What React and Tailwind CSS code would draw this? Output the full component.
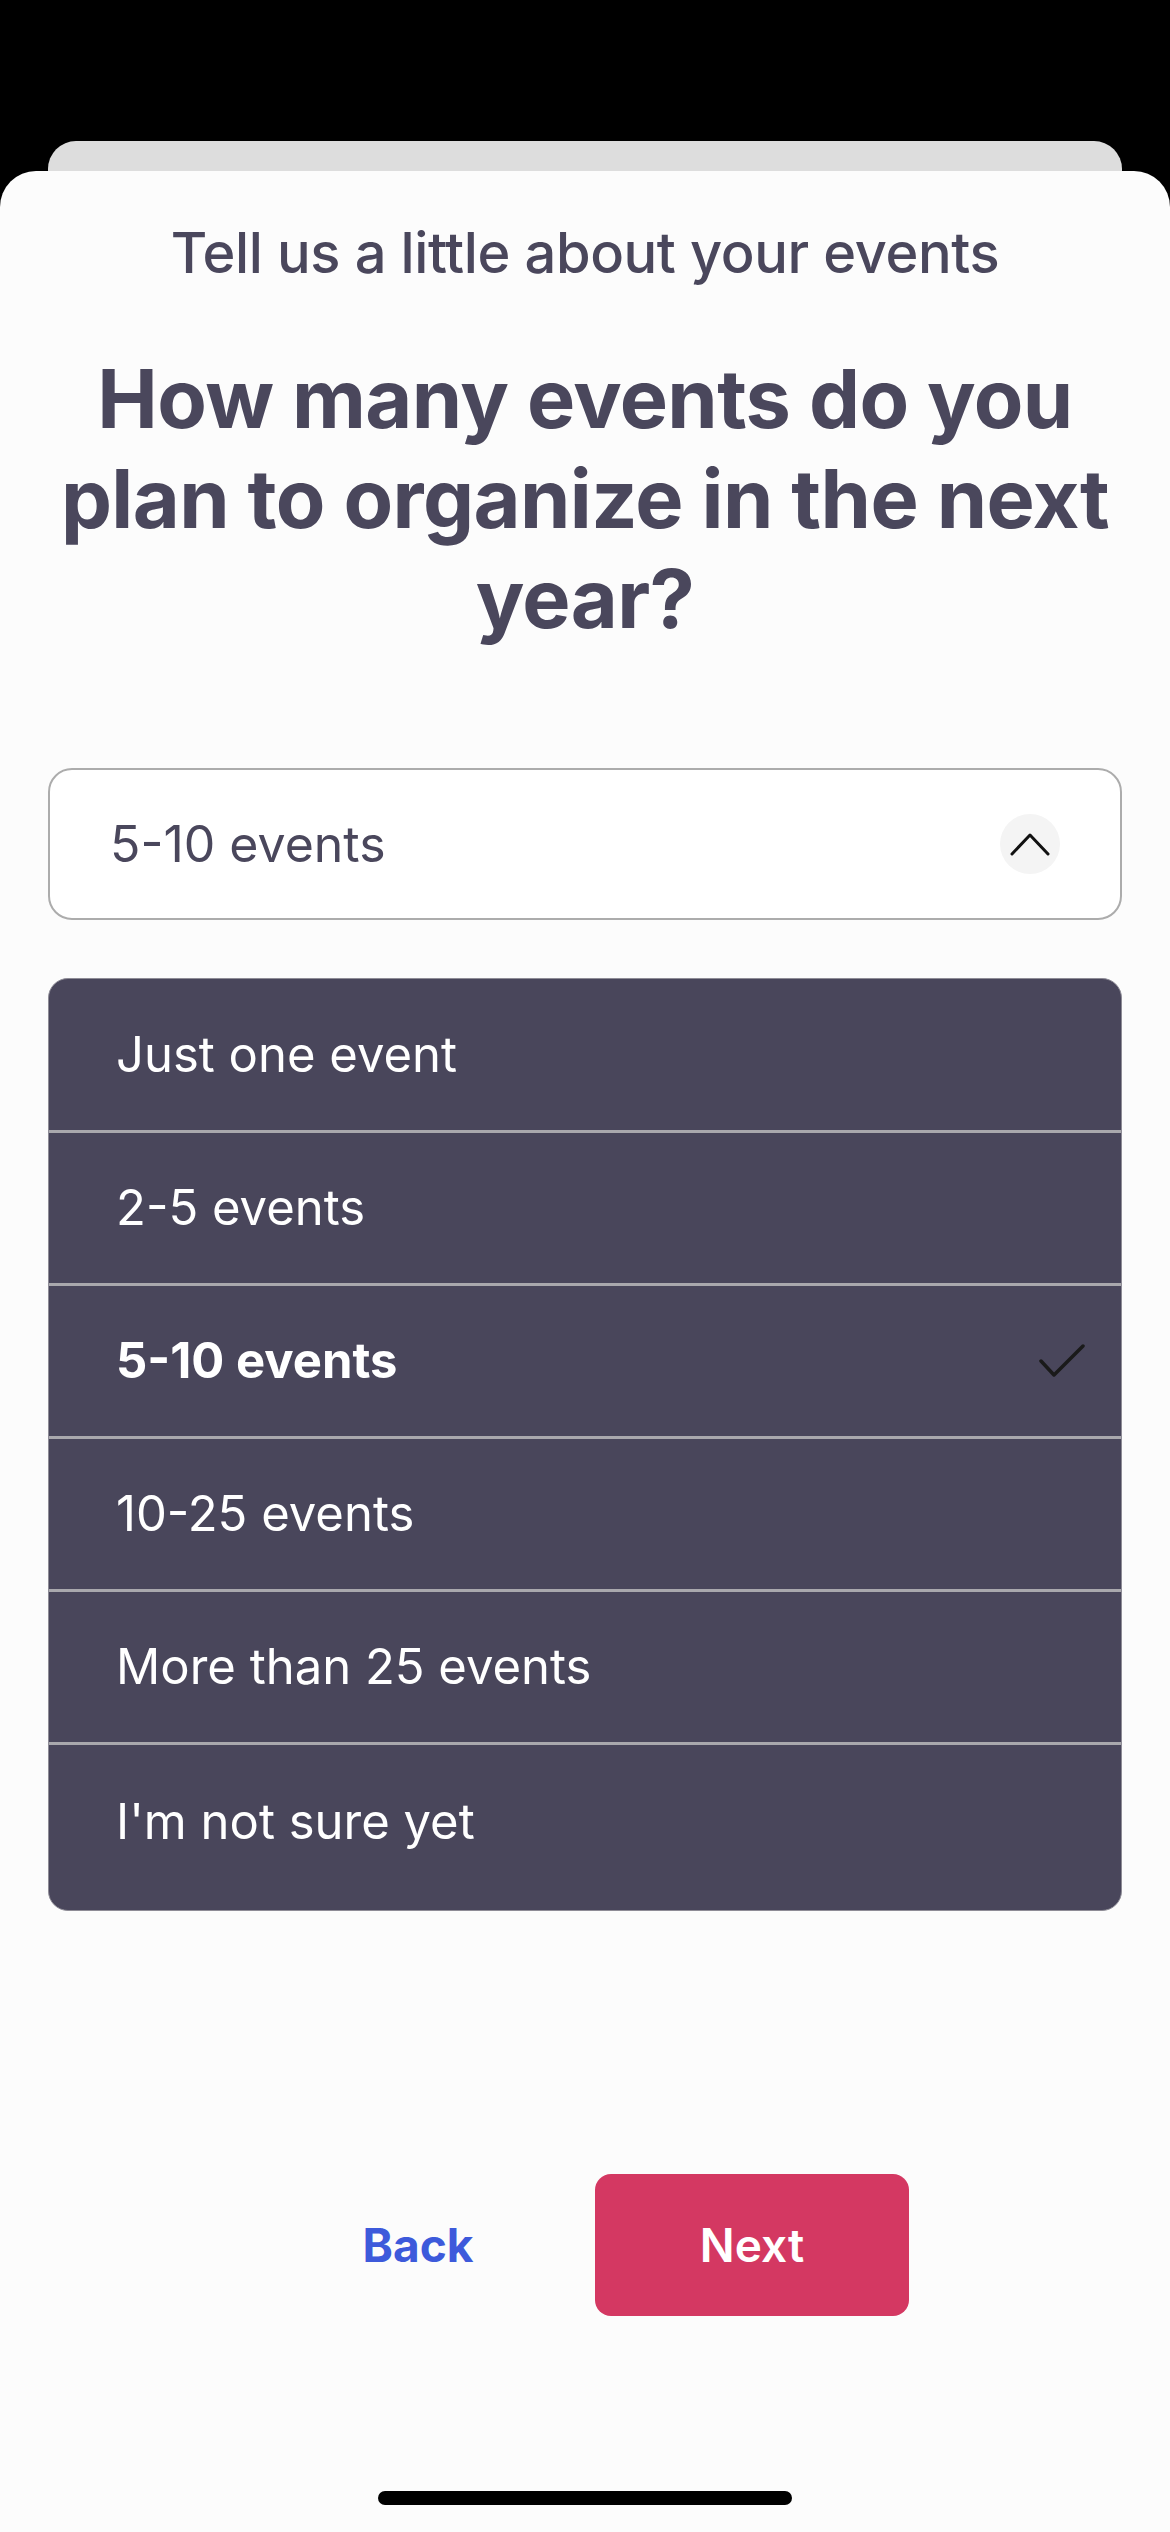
import React from "react";

const options = [
  "Just one event",
  "2-5 events",
  "5-10 events",
  "10-25 events",
  "More than 25 events",
  "I'm not sure yet",
];

export default function App() {
  const selected = "5-10 events";
  return (
    <div
      className="w-[1170px] h-[2532px] bg-black flex flex-col overflow-hidden"
      style={{ fontFamily: "Inter, 'Noto Sans', sans-serif" }}
    >
      <div className="h-[141px] shrink-0" />
      <div className="mx-[48px] h-[30px] shrink-0 rounded-t-[28px] bg-[#dddddd]" />
      <div className="flex-1 bg-[#fcfcfc] rounded-t-[36px] flex flex-col items-center">
        <p className="mt-[50px] text-[56px] leading-[64px] font-medium text-[#4a475c] tracking-[-0.4px]">
          Tell us a little about your events
        </p>
        <h1 className="mt-[64px] text-center text-[81px] leading-[100px] font-bold text-[#4a475c] tracking-[-0.6px]">
          How many events do you
          <br />
          plan to organize in the next
          <br />
          year?
        </h1>

        <div className="mt-[119px] w-[1074px] h-[152px] rounded-[24px] border-2 border-[#acacac] bg-white flex items-center justify-between pl-[60px] pr-[60px]">
          <span className="text-[50px] text-[#4a475c]">5-10 events</span>
          <div className="w-[60px] h-[60px] rounded-full bg-[#f4f4f4] flex items-center justify-center">
            <svg width="40" height="24" viewBox="0 0 40 24" fill="none">
              <path d="M2 22 L20 3 L38 22" stroke="#111" strokeWidth="3" strokeLinecap="round" strokeLinejoin="round" />
            </svg>
          </div>
        </div>

        <div className="mt-[58px] w-[1074px] rounded-[20px] border border-[#8e8c96] bg-[#49465b] overflow-hidden flex flex-col">
          {options.map((o, i) => (
            <div
              key={o}
              className={
                "flex items-center justify-between pl-[67px] pr-[36px] " +
                (i === 0 ? "h-[151px] " : "h-[153px] border-t-[3px] border-[#a9a8ad] ") +
                (i === options.length - 1 ? "box-content pb-[12px]" : "")
              }
            >
              <span
                className={
                  "text-[49px] text-white " + (o === selected ? "font-bold" : "font-normal")
                }
              >
                {o}
              </span>
              {o === selected && (
                <svg width="46" height="34" viewBox="0 0 46 34" fill="none">
                  <path d="M2 17 L15 31 L44 2" stroke="#1a1a1a" strokeWidth="3.5" strokeLinecap="round" strokeLinejoin="round" />
                </svg>
              )}
            </div>
          ))}
        </div>

        <div className="mt-[263px] flex gap-[20px]">
          <button className="w-[314px] h-[142px] text-[46px] font-bold text-[#3d5adb]">Back</button>
          <button className="w-[314px] h-[142px] rounded-[16px] bg-[#d43862] text-[46px] font-semibold text-white">
            Next
          </button>
        </div>

        <div className="flex-1" />
        <div className="mb-[27px] w-[414px] h-[14px] rounded-full bg-black" />
      </div>
    </div>
  );
}
